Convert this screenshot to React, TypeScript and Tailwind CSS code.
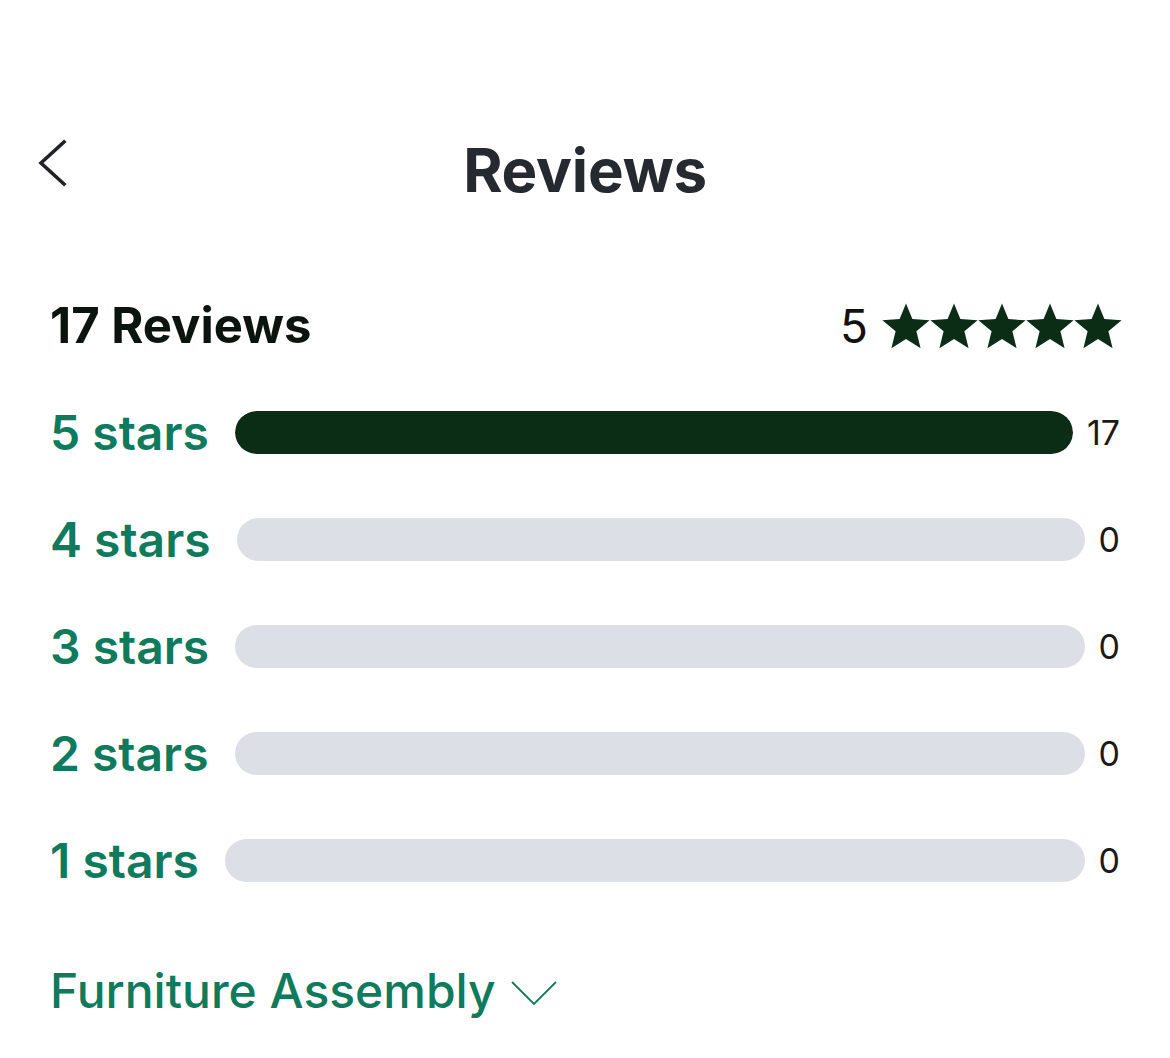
const rows = [
  { label: "5 stars", count: 17 },
  { label: "4 stars", count: 0 },
  { label: "3 stars", count: 0 },
  { label: "2 stars", count: 0 },
  { label: "1 stars", count: 0 },
];

const Star = () => (
  <svg viewBox="0 0 24 23" className="w-[48px] h-[47px]" fill="#0b2d16">
    <path d="M12 0l3.2 7.8 8.6.6-6.6 5.5 2.1 8.5L12 17.8l-7.3 4.6 2.1-8.5L.2 8.4l8.6-.6z" />
  </svg>
);

export default function App() {
  const total = 17;
  return (
    <div className="w-[1170px] h-[1058px] bg-white font-['Inter',sans-serif] px-[50px] pt-[136px]">
      <div className="relative flex items-center justify-center h-[68px]">
        <svg
          viewBox="0 0 30 48"
          className="absolute -left-[13px] top-[3px] w-[30px] h-[48px]"
          fill="none"
          stroke="#1f2328"
          strokeWidth={3.6}
          strokeLinecap="square"
        >
          <path d="M27 3L4 24l23 21" />
        </svg>
        <h1 className="text-[60px] font-bold text-[#252a31] tracking-[-0.2px]">Reviews</h1>
      </div>

      <div className="flex items-center justify-between mt-[92px] h-[60px]">
        <span className="text-[49px] font-bold text-[#0c1410]">17 Reviews</span>
        <div className="flex items-center -mr-[2px]">
          <span className="text-[46px] text-[#111] mr-[14px]">5</span>
          <Star />
          <Star />
          <Star />
          <Star />
          <Star />
        </div>
      </div>

      <div className="flex flex-col gap-[64px] mt-[55px]">
        {rows.map((r) => (
          <div key={r.label} className="flex items-center h-[43px]">
            <span className="text-[48px] font-semibold text-[#0f7a5c] whitespace-nowrap mr-[26px]">
              {r.label}
            </span>
            <div className="flex-1 h-[43px] rounded-full bg-[#dcdfe6] overflow-hidden">
              <div
                className="h-full rounded-full bg-[#0b2d16]"
                style={{ width: `${(r.count / total) * 100}%` }}
              />
            </div>
            <span className="text-[34px] text-[#1a1a1a] ml-[14px]">{r.count}</span>
          </div>
        ))}
      </div>

      <div className="flex items-center mt-[73px]">
        <span className="text-[48px] font-medium text-[#0f7a5c]">Furniture Assembly</span>
        <svg
          viewBox="0 0 46 26"
          className="w-[46px] h-[26px] ml-[15px] mt-[6px]"
          fill="none"
          stroke="#0f7a5c"
          strokeWidth={1.8}
        >
          <path d="M1 1l22 22L45 1" />
        </svg>
      </div>
    </div>
  );
}
